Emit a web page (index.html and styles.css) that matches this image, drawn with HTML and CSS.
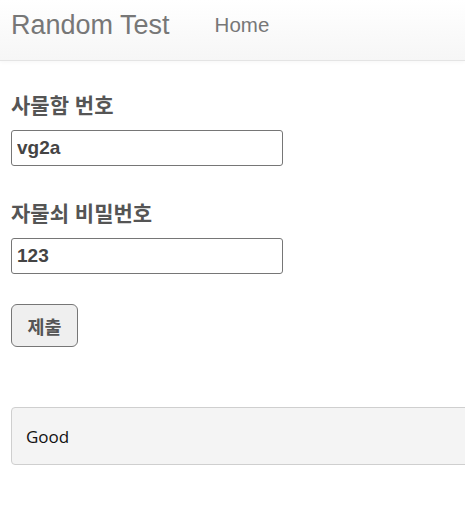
FILE: index.html
```html
<!DOCTYPE html>
<html lang="ko">
<head>
<meta charset="utf-8">
<link rel="stylesheet" href="styles.css">
</head>
<body>
<nav class="navbar">
  <span class="brand">Random Test</span>
  <span class="nav-link">Home</span>
</nav>
<main class="content">
  <form class="form">
    <label class="field-label">사물함 번호</label>
    <input class="field-input" type="text" value="vg2a">
    <label class="field-label second">자물쇠 비밀번호</label>
    <input class="field-input" type="text" value="123">
    <div class="actions"><button class="submit" type="button">제출</button></div>
  </form>
  <div class="well">Good</div>
</main>
</body>
</html>
```

FILE: styles.css
```css
html, body {
  margin: 0;
  padding: 0;
  overflow: hidden;
  background: #fff;
}
body {
  font-family: "Liberation Sans", "Noto Sans CJK KR", sans-serif;
  color: #333;
}
.navbar {
  height: 61px;
  box-sizing: border-box;
  border-bottom: 1px solid #e4e4e4;
  background: linear-gradient(to bottom, #ffffff 0%, #f6f6f6 100%);
  box-shadow: 0 1px 4px rgba(0,0,0,0.04);
  display: flex;
  align-items: center;
  padding: 0 11px;
}
.brand {
  font-size: 27px;
  color: #777;
  margin-top: -10px;
}
.nav-link {
  font-size: 20.5px;
  color: #777;
  margin-left: 45px;
  margin-top: -10px;
}
.content {
  padding: 0 0 0 11px;
}
.form {
  display: flex;
  flex-direction: column;
  align-items: flex-start;
}
.field-label {
  font-family: "Noto Sans CJK KR", sans-serif;
  font-weight: 700;
  font-size: 21px;
  line-height: 24px;
  color: #555;
  margin-top: 31px;
}
.field-label.second {
  margin-top: 34px;
}
.field-input {
  margin-top: 14px;
  width: 272px;
  height: 36px;
  box-sizing: border-box;
  border: 1px solid #767676;
  border-radius: 3px;
  padding: 0 5px;
  font-family: "Liberation Sans", sans-serif;
  font-weight: 700;
  font-size: 19px;
  color: #444;
  background: #fff;
}
.actions {
  margin-top: 30px;
}
.submit {
  width: 67px;
  height: 43px;
  box-sizing: border-box;
  border: 1px solid #767676;
  border-radius: 6px;
  background: #efefef;
  font-family: "Noto Sans CJK KR", sans-serif;
  font-weight: 700;
  font-size: 18.5px;
  color: #555;
  padding: 0;
}
.well {
  margin-top: 60px;
  margin-right: -20px;
  height: 58px;
  box-sizing: border-box;
  border: 1px solid #cfcfcf;
  border-radius: 4px;
  background: #f4f4f4;
  display: flex;
  align-items: center;
  padding: 0 14px;
  font-family: "Open Sans", sans-serif;
  font-size: 17px;
  color: #111;
}
```
